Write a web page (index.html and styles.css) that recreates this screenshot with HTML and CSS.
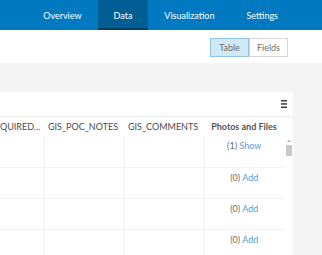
FILE: index.html
```
<!DOCTYPE html>
<html lang="en">
<head>
    <meta charset="UTF-8">
    <meta name="viewport" content="width=device-width, initial-scale=1.0">
    <title>Data</title>
    <link rel="stylesheet" href="styles.css">
</head>
<body>
    <nav class="topnav">
        <a class="tab">Overview</a>
        <a class="tab active">Data</a>
        <a class="tab">Visualization</a>
        <a class="tab">Settings</a>
    </nav>
    <div class="subbar">
        <div class="toggle">
            <button class="seg selected">Table</button>
            <button class="seg">Fields</button>
        </div>
    </div>
    <div class="content">
        <div class="card">
            <div class="card-tools">
                <svg class="menu" width="6" height="8" viewBox="0 0 6 8">
                    <rect x="0" y="0" width="6" height="1.5" fill="#3a3a3a"/>
                    <rect x="0" y="3.2" width="6" height="1.5" fill="#3a3a3a"/>
                    <rect x="0" y="6.5" width="6" height="1.5" fill="#3a3a3a"/>
                </svg>
            </div>
            <div class="grid-wrap">
                <table class="grid">
                    <thead>
                        <tr>
                            <th class="c1">QUIRED...</th>
                            <th>GIS_POC_NOTES</th>
                            <th>GIS_COMMENTS</th>
                            <th class="files">Photos and Files</th>
                        </tr>
                    </thead>
                    <tbody>
                        <tr><td class="c1"></td><td></td><td></td><td class="files">(1) <a>Show</a></td></tr>
                        <tr><td class="c1"></td><td></td><td></td><td class="files">(0) <a>Add</a></td></tr>
                        <tr><td class="c1"></td><td></td><td></td><td class="files">(0) <a>Add</a></td></tr>
                        <tr><td class="c1"></td><td></td><td></td><td class="files">(0) <a>Add</a></td></tr>
                    </tbody>
                </table>
                <div class="vscroll">
                    <span class="arrow"></span>
                    <span class="thumb"></span>
                </div>
            </div>
        </div>
    </div>
</body>
</html>
```
FILE: styles.css
```
body {
    margin: 0;
    font-family: Lato, "Open Sans", sans-serif;
    color: #4c4c4c;
    background: #f4f4f4;
    overflow: hidden;
}
.topnav {
    display: flex;
    justify-content: flex-end;
    height: 30px;
    padding-right: 28px;
    background: #0079c1;
}
.tab {
    display: flex;
    align-items: center;
    padding: 0 16px;
    font-size: 9px;
    color: #fff;
    box-sizing: border-box;
}
.tab.active {
    background: #005e95;
    border-bottom: 2px solid #003d61;
    padding-top: 2px;
}
.subbar {
    display: flex;
    justify-content: flex-end;
    height: 33px;
    padding: 8px 34px 0 0;
    box-sizing: border-box;
    background: #fff;
}
.toggle {
    display: flex;
    height: 19px;
}
.seg {
    width: 39px;
    font-family: inherit;
    font-size: 9px;
    color: #6e6e6e;
    background: #fff;
    border: 1px solid #d6d6d6;
    padding: 0;
}
.seg.selected {
    background: #d2e9f9;
    border-color: #8ec2e8;
}
.content {
    padding: 29px 29px 0 0;
}
.card {
    background: #fff;
}
.card-tools {
    display: flex;
    justify-content: flex-end;
    align-items: center;
    height: 25px;
    padding-right: 6px;
    border-bottom: 1px solid #ececec;
    box-sizing: border-box;
}
.grid-wrap {
    display: flex;
}
.grid {
    border-collapse: collapse;
    width: 284px;
    table-layout: fixed;
}
.grid th {
    height: 19px;
    font-size: 9px;
    font-weight: normal;
    text-align: left;
    padding: 0 4px;
    white-space: nowrap;
    overflow: hidden;
    width: 72px;
}
.grid th.c1 {
    width: 44px;
    padding: 0;
}
.grid th.files {
    text-align: center;
    font-weight: bold;
    color: #555;
}
.grid td {
    height: 31px;
    padding: 4px 0 0;
    box-sizing: border-box;
    vertical-align: top;
    font-size: 9px;
    border-top: 1px solid #f2f2f2;
    border-left: 1px solid #f2f2f2;
}
.grid tbody tr:first-child td {
    border-top: none;
}
.grid td.c1 {
    border-left: none;
}
.grid td.files {
    text-align: center;
    color: #6e6e6e;
}
.grid td.files a {
    color: #5a9ad0;
}
.vscroll {
    width: 9px;
    margin-top: 19px;
    display: flex;
    flex-direction: column;
    align-items: center;
    padding-top: 4px;
    gap: 3px;
}
.arrow {
    width: 0;
    height: 0;
    border-left: 2px solid transparent;
    border-right: 2px solid transparent;
    border-bottom: 2px solid #a3a3a3;
}
.thumb {
    width: 6px;
    height: 11px;
    background: #c8c8c8;
}
```
